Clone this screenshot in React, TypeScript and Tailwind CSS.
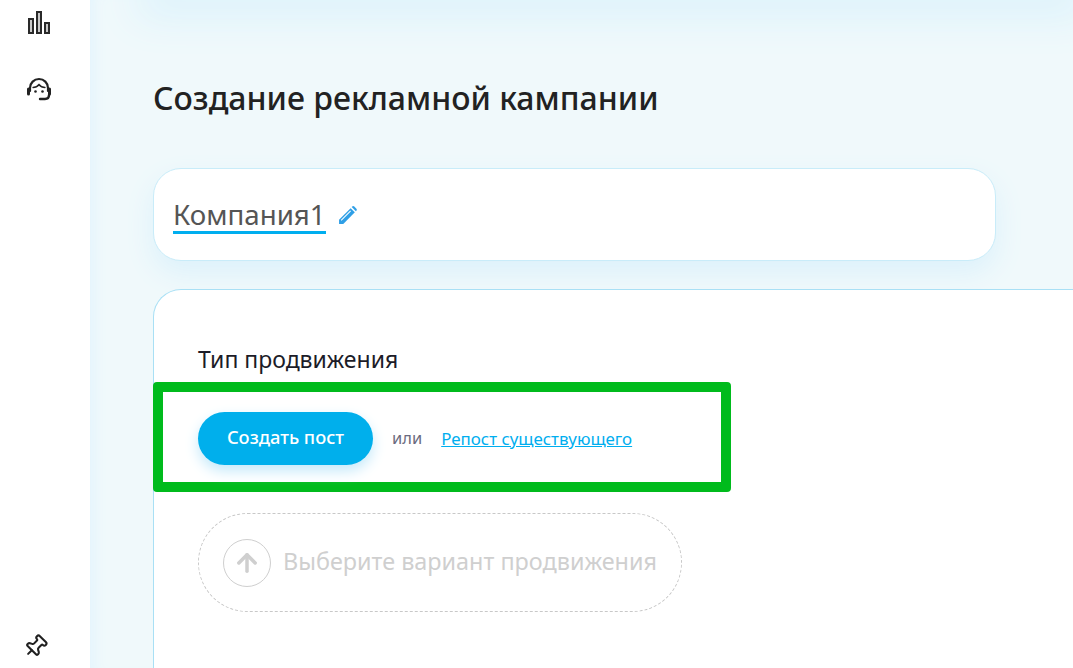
import React from 'react';
import { ArrowUp, Pin } from 'lucide-react';

const font = { fontFamily: '"Noto Sans", "Open Sans", sans-serif' };

function ChartIcon() {
  return (
    <svg width="24" height="24" viewBox="0 0 24 24" fill="#c9c9c9" stroke="#2a2a2a" strokeWidth="2">
      <rect x="2" y="9" width="4" height="14" />
      <rect x="10" y="2" width="4" height="21" />
      <rect x="18" y="13" width="4" height="10" />
    </svg>
  );
}

function HeadsetIcon() {
  return (
    <svg width="26" height="24" viewBox="0 0 26 24" fill="none" stroke="#222" strokeWidth="2.200" strokeLinecap="round">
      <path d="M4 14V11a9 9 0 0 1 18 0v3" />
      <path d="M7 10.500c2.500 0 4.500-1 6-3 1.500 2 3.500 3 6 3" strokeWidth="1.300" />
      <path d="M2.500 12v5M23.500 12v5" strokeWidth="3" />
      <path d="M23 18c0 3-2 4-4 4h-5" strokeWidth="2.400" />
      <circle cx="9.500" cy="14.500" r="1.300" fill="#222" stroke="none" />
      <circle cx="16.500" cy="14.500" r="1.300" fill="#222" stroke="none" />
    </svg>
  );
}

function PencilIcon() {
  return (
    <svg width="20" height="20" viewBox="0 0 19 19" fill="#2f9fe6">
      <path d="M1 14 L12 3 L16 7 L5 18 L1 18 Z" />
      <path d="M13.500 1.500 a1.500 1.500 0 0 1 2 0 l2 2 a1.500 1.500 0 0 1 0 2 L17 6 L13 2 Z" />
      <path d="M3 14.500 L12 5.500" stroke="#fff" strokeWidth="1" />
    </svg>
  );
}

export default function App() {
  return (
    <div className="flex h-[668px] w-full overflow-hidden bg-white" style={font}>
      <aside className="flex w-[90px] shrink-0 flex-col items-center justify-between bg-white pr-[12px] pt-[10px] pb-[9px]">
        <div className="flex flex-col items-center gap-[43px]">
          <ChartIcon />
          <HeadsetIcon />
        </div>
        <Pin size={25} strokeWidth={2} color="#222" className="mr-[8px] rotate-45" />
      </aside>

      <main className="min-w-0 flex-1 bg-[#f0f9fb] shadow-[inset_14px_0_14px_-10px_#e3f4fd]">
        <div className="ml-[63px] h-0 shadow-[0_0_40px_16px_#d9f1fc]" />
        <div className="pl-[63px] pt-[76px]">
          <h1 className="text-[32px] leading-[44px] font-medium text-[#222]">Создание рекламной кампании</h1>

          <section className="mt-[48px] flex h-[93px] w-[843px] items-center gap-[12px] rounded-[28px] border border-[#c9ecf9] bg-white pl-[19px] shadow-[0_12px_28px_#dcf1fb]">
            <span className="mt-[2px] border-b-[3px] border-[#00aeef] text-[27.700px] leading-[33px] text-[#555]">Компания1</span>
            <PencilIcon />
          </section>

          <section className="mt-[28px] h-[500px] rounded-tl-[28px] border border-r-0 border-[#a9e0f5] bg-white pl-[44px] pt-[54px]">
            <h2 className="text-[23px] leading-[30px] text-[#1c1c28]">Тип продвижения</h2>

            <div className="mt-[8px] -ml-[45px] flex h-[110px] w-[578px] items-center rounded-[4px] border-[10px] border-[#00bb1c] pl-[35px] pt-[3px]">
              <button className="h-[53px] w-[175px] rounded-full bg-[#00afec] pb-[4px] text-[18.300px] font-medium text-white shadow-[0_6px_14px_#c4e9fa]">
                Создать пост
              </button>
              <span className="ml-[19px] text-[16.500px] text-[#6b6b80]">или</span>
              <a className="ml-[19px] text-[16.900px] text-[#00aeef] underline">Репост существующего</a>
            </div>

            <div className="mt-[21px] flex h-[99px] w-[484px] items-center rounded-[50px] border border-dashed border-[#c8c8c8] pl-[24px]">
              <span className="flex h-[48px] w-[48px] items-center justify-center rounded-full border border-[#cfcfcf]">
                <ArrowUp size={28} strokeWidth={3} color="#cfcfcf" />
              </span>
              <span className="mb-[2px] ml-[12px] text-[23.400px] text-[#cfcfcf]">Выберите вариант продвижения</span>
            </div>
          </section>
        </div>
      </main>
    </div>
  );
}
